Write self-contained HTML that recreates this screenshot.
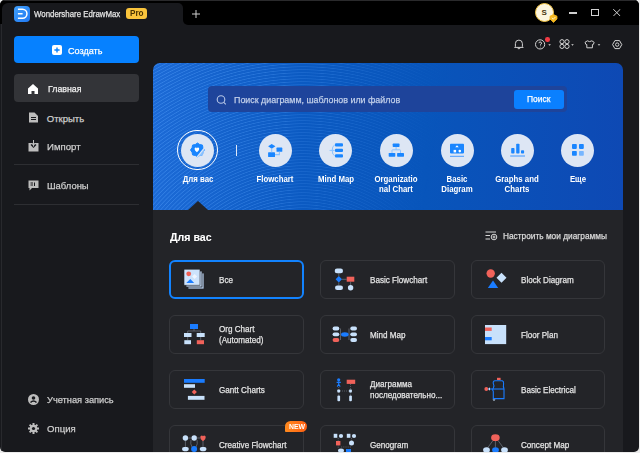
<!DOCTYPE html>
<html><head><meta charset="utf-8">
<style>
*{margin:0;padding:0;box-sizing:border-box}
html,body{width:640px;height:453px;overflow:hidden;background:#ececec;font-family:"Liberation Sans",sans-serif;color:#e6e6e6}
.a{position:absolute}
.t{position:absolute;line-height:1;white-space:nowrap;transform-origin:0 0;-webkit-text-stroke:.25px currentColor;margin-top:.4px}
#win{left:0;top:0;width:639px;height:452px;background:#18191d;border-radius:5px;overflow:hidden}
#titlebar{left:183px;top:0;width:456px;height:24.5px;background:#000;border-radius:0 0 0 5px}
#tbl{left:0;top:0;width:183px;height:24px;background:#000}
#tab{left:2px;top:2.5px;width:181px;height:40px;background:#18191d;border-radius:6px 5px 0 0}
#main{left:153px;top:63px;width:470px;height:392px;background:#232428;border-radius:7px 7px 0 0;overflow:hidden}
#banner{left:0;top:0;width:470px;height:147px;background:linear-gradient(90deg,#1c6ad6 0%,#0b5ac2 32%,#0855bb 58%,#0e49b4 100%)}
#stripes{left:0;top:0;width:470px;height:147px;background:repeating-radial-gradient(circle at 150px 270px,rgba(80,160,255,0) 0,rgba(80,160,255,0) 1.5px,rgba(90,165,255,.42) 2.2px,rgba(80,160,255,0) 3px);-webkit-mask-image:linear-gradient(100deg,#000 0%,rgba(0,0,0,.7) 30%,rgba(0,0,0,0) 60%);mask-image:linear-gradient(100deg,#000 0%,rgba(0,0,0,.7) 30%,rgba(0,0,0,0) 60%)}
.nt{font-size:9.5px;color:#cdcdcd}
.cat{position:absolute;width:70px;text-align:center;font-size:9px;font-weight:bold;color:#fff;line-height:10px}
.circ{position:absolute;width:33px;height:33px;border-radius:50%;background:#dde6f4}
.card{position:absolute;width:134.3px;height:38.6px;border:1px solid #35363a;border-radius:6px}
.ct{font-size:9px;color:#e4e4e4}
</style></head><body>
<div id="win" class="a">
<div id="tbl" class="a"></div><div id="titlebar" class="a"></div><div class="a" style="left:0;top:0;width:639px;height:1px;background:#2a2a2c"></div><div class="a" style="left:1px;top:24px;width:1px;height:430px;background:#28292d"></div>
<div id="tab" class="a"></div>
<!-- logo -->
<svg class="a" style="left:14px;top:6px" width="16" height="16" viewBox="0 0 16 16">
<defs><linearGradient id="lg" x1="0" y1="0" x2="1" y2="1"><stop offset="0" stop-color="#41a0fb"/><stop offset="1" stop-color="#1f78f2"/></linearGradient></defs>
<rect width="16" height="16" rx="4" fill="url(#lg)"/>
<path d="M3.9 3.3H8.5A4.45 4.45 0 0 1 8.5 12.2H3.9M3.9 7.75H8.6" stroke="#fff" stroke-width="1.5" fill="none"/>
</svg>
<div class="t" style="left:34px;top:9.6px;font-size:9.2px;color:#e6e6e6;transform:scaleX(.855)">Wondershare EdrawMax</div>
<div class="a" style="left:125.7px;top:8.2px;width:21.3px;height:11.3px;border-radius:3px;background:#fac43c"></div>
<div class="t" style="left:129.7px;top:9.1px;font-size:8.6px;font-weight:bold;color:#4a3200;-webkit-text-stroke:0;transform:scaleX(.95)">Pro</div>
<svg class="a" style="left:191.5px;top:9.5px" width="8" height="8" viewBox="0 0 8 8"><path d="M4 0V8M0 4H8" stroke="#d0d0d0" stroke-width="1"/></svg>

<!-- avatar & window controls -->
<div class="a" style="left:534.8px;top:2.8px;width:19.2px;height:19.2px;border-radius:50%;background:#fcf5df;border:1.5px solid #f2c445"></div>
<div class="t" style="left:541.6px;top:8.4px;font-size:8px;font-weight:bold;color:#4a3510;-webkit-text-stroke:0">S</div>
<svg class="a" style="left:549px;top:13.5px" width="9" height="9" viewBox="0 0 9 9"><path d="M1 2.2L4.5 0.6L8 2.2V5L4.5 8.4L1 5Z" fill="#f5b820" stroke="#f5b820" stroke-width=".8" stroke-linejoin="round"/><path d="M2.8 3.8L4.3 5.2L6.4 3" stroke="#fff6d6" stroke-width=".9" fill="none"/></svg>
<div class="a" style="left:569.3px;top:12.3px;width:7.7px;height:1.3px;background:#cfcfcf"></div>
<div class="a" style="left:590.6px;top:9.1px;width:8.8px;height:7px;border:1.1px solid #d2d2d2"></div>
<svg class="a" style="left:613.2px;top:9px" width="7.6" height="7.3" viewBox="0 0 7.6 7.3"><path d="M0.2 0.1L7.4 7.2M7.4 0.1L0.2 7.2" stroke="#d2d2d2" stroke-width="1"/></svg>

<!-- toolbar icons -->
<svg class="a" style="left:512px;top:37px" width="116" height="15" viewBox="512 37 116 15" fill="none" stroke="#d2d2d2" stroke-width="1">
<path d="M515.4 46.6V43.6A3.5 3.5 0 0 1 522.4 43.6V46.6L523.2 47.4H514.6Z" stroke-linejoin="round"/><path d="M517.7 47.6A1.2 1.2 0 0 0 520.1 47.6"/>
<circle cx="540.1" cy="44.4" r="4.6"/><path d="M538.9 43.2A1.3 1.3 0 1 1 540.5 44.5V45.5M540.4 46.8V47.3"/>
<path d="M548.3 44.2L550.9 44.2L549.6 45.7Z" fill="#dcdcdc" stroke="none"/>
<circle cx="562" cy="41.7" r="2.1"/><circle cx="567" cy="41.7" r="2.1"/><circle cx="562" cy="46.4" r="2.1"/><circle cx="567" cy="46.4" r="2.1"/>
<path d="M571.2 44.2L573.8 44.2L572.5 45.7Z" fill="#dcdcdc" stroke="none"/>
<path d="M587.3 40.8Q589.6 42.4 591.9 40.8L594.2 42.4L593.2 44.6H592.4V47.8H586.8V44.6H586L585 42.4Z" stroke-linejoin="round"/>
<path d="M597.7 44.2L600.3 44.2L599 45.7Z" fill="#dcdcdc" stroke="none"/>
<path d="M612.6 44.6L614.9 40.6H619.5L621.8 44.6L619.5 48.6H614.9Z" stroke-linejoin="round"/><circle cx="617.2" cy="44.6" r="1.7"/>
</svg>
<div class="a" style="left:545.4px;top:37px;width:4.6px;height:4.6px;border-radius:50%;background:#f03a44"></div>

<!-- sidebar -->
<div class="a" style="left:14px;top:36px;width:125px;height:27px;border-radius:4px;background:#0681ff"></div>
<svg class="a" style="left:52px;top:45px" width="10" height="10" viewBox="0 0 10 10"><rect width="10" height="10" rx="2" fill="#fff"/><path d="M5 2.4V7.6M2.4 5H7.6" stroke="#0681ff" stroke-width="1.4"/></svg>
<div class="t" style="left:68px;top:45.5px;font-size:9.5px;color:#fff;transform:scaleX(.953)">Создать</div>

<div class="a" style="left:14px;top:74px;width:125px;height:28px;border-radius:4px;background:#333438"></div>
<svg class="a" style="left:27px;top:83px" width="12" height="12" viewBox="0 0 12 12"><path d="M1 5.5L6 1L11 5.5V11H7.5V8H4.5V11H1Z" fill="#fff"/></svg>
<div class="t nt" style="left:47.5px;top:84.1px;color:#f2f2f2;transform:scaleX(.925)">Главная</div>

<svg class="a" style="left:28px;top:112px" width="11" height="11" viewBox="0 0 11 11"><path d="M1 0.5H6.5L10 4V10.5H1Z" fill="#bdbdbd"/><path d="M3 5.5H8M3 7.5H8" stroke="#18191d" stroke-width="1"/></svg>
<div class="t nt" style="left:46.8px;top:113.6px;transform:scaleX(1.0)">Открыть</div>

<svg class="a" style="left:28px;top:140px" width="11" height="12" viewBox="0 0 11 12"><path d="M0.5 3H10.5V11.5H0.5Z" fill="#bdbdbd"/><path d="M5.5 0V7M3 4.5L5.5 7L8 4.5" stroke="#18191d" stroke-width="1.3" fill="none"/><path d="M5.5 0V6.5" stroke="#bdbdbd" stroke-width="1"/></svg>
<div class="t nt" style="left:46.8px;top:141.9px;transform:scaleX(1.01)">Импорт</div>
<div class="a" style="left:14px;top:164px;width:125px;height:1px;background:#2d2e32"></div>

<svg class="a" style="left:28px;top:180px" width="11" height="11" viewBox="0 0 11 11"><path d="M0.5 0.5H10.5V8H4L1.5 10.5V8H0.5Z" fill="#bdbdbd"/><path d="M2.5 3H5M2.5 5H5M6.5 2.5V6" stroke="#18191d" stroke-width="1"/></svg>
<div class="t nt" style="left:46.8px;top:181.1px;transform:scaleX(.99)">Шаблоны</div>
<div class="a" style="left:14px;top:204px;width:125px;height:1px;background:#2d2e32"></div>

<svg class="a" style="left:28px;top:393.5px" width="11" height="11" viewBox="0 0 11 11"><circle cx="5.5" cy="5.5" r="5.5" fill="#bdbdbd"/><circle cx="5.5" cy="4" r="1.8" fill="#18191d"/><path d="M2.5 8.5Q5.5 5.5 8.5 8.5" stroke="#18191d" stroke-width="1.5" fill="none"/></svg>
<div class="t nt" style="left:46.9px;top:394.6px;transform:scaleX(.975)">Учетная запись</div>
<svg class="a" style="left:28px;top:422.5px" width="11" height="11" viewBox="0 0 11 11"><g fill="#bdbdbd"><circle cx="5.5" cy="5.5" r="3.8"/><rect x="4.5" y="0" width="2" height="11"/><rect x="0" y="4.5" width="11" height="2"/><rect x="4.5" y="0" width="2" height="11" transform="rotate(45 5.5 5.5)"/><rect x="4.5" y="0" width="2" height="11" transform="rotate(-45 5.5 5.5)"/></g><circle cx="5.5" cy="5.5" r="1.6" fill="#18191d"/></svg>
<div class="t nt" style="left:46.9px;top:423.6px;transform:scaleX(1.01)">Опция</div>

<!-- main -->
<div id="main" class="a">
  <div id="banner" class="a"></div><div id="stripes" class="a"></div>
  <div class="a" style="left:35px;top:138px;width:0;height:0;border-left:10px solid transparent;border-right:10px solid transparent;border-bottom:9px solid #232428"></div>
</div>
<div class="a" style="left:208px;top:85.5px;width:359px;height:26.5px;border-radius:4px;background:#1e449b"></div>
<svg class="a" style="left:216px;top:95px" width="12" height="10" viewBox="0 0 12 10"><circle cx="5" cy="4.5" r="3.8" stroke="#b9c8e8" stroke-width="1.1" fill="none"/><path d="M7.8 7.3L9.8 9.3" stroke="#b9c8e8" stroke-width="1.1"/></svg>
<div class="t" style="left:234.4px;top:94.9px;font-size:9.5px;color:#c3d0ea;transform:scaleX(.935)">Поиск диаграмм, шаблонов или файлов</div>
<div class="a" style="left:514px;top:89.5px;width:50px;height:19.5px;border-radius:3px;background:#0a80ff"></div>
<div class="t" style="left:526.9px;top:95.1px;font-size:9px;color:#fff;transform:scaleX(.938)">Поиск</div>
<div class="circ" style="left:181.2px;top:133.6px"></div>
<div class="t" style="left:157.7px;top:174.4px;width:80px;text-align:center;font-size:9px;font-weight:bold;color:#fff;transform:scaleX(.87);transform-origin:50% 0;-webkit-text-stroke:0">Для вас</div>
<div class="circ" style="left:258.8px;top:133.6px"></div>
<div class="t" style="left:235.3px;top:174.4px;width:80px;text-align:center;font-size:9px;font-weight:bold;color:#fff;transform:scaleX(.87);transform-origin:50% 0;-webkit-text-stroke:0">Flowchart</div>
<div class="circ" style="left:319.4px;top:133.6px"></div>
<div class="t" style="left:295.9px;top:174.4px;width:80px;text-align:center;font-size:9px;font-weight:bold;color:#fff;transform:scaleX(.87);transform-origin:50% 0;-webkit-text-stroke:0">Mind Map</div>
<div class="circ" style="left:379.9px;top:133.6px"></div>
<div class="t" style="left:356.4px;top:174.4px;width:80px;text-align:center;font-size:9px;font-weight:bold;color:#fff;transform:scaleX(.87);transform-origin:50% 0;-webkit-text-stroke:0">Organizatio</div>
<div class="t" style="left:356.4px;top:184.4px;width:80px;text-align:center;font-size:9px;font-weight:bold;color:#fff;transform:scaleX(.87);transform-origin:50% 0;-webkit-text-stroke:0">nal Chart</div>
<div class="circ" style="left:440.5px;top:133.6px"></div>
<div class="t" style="left:417.0px;top:174.4px;width:80px;text-align:center;font-size:9px;font-weight:bold;color:#fff;transform:scaleX(.87);transform-origin:50% 0;-webkit-text-stroke:0">Basic</div>
<div class="t" style="left:417.0px;top:184.4px;width:80px;text-align:center;font-size:9px;font-weight:bold;color:#fff;transform:scaleX(.87);transform-origin:50% 0;-webkit-text-stroke:0">Diagram</div>
<div class="circ" style="left:500.9px;top:133.6px"></div>
<div class="t" style="left:477.4px;top:174.4px;width:80px;text-align:center;font-size:9px;font-weight:bold;color:#fff;transform:scaleX(.87);transform-origin:50% 0;-webkit-text-stroke:0">Graphs and</div>
<div class="t" style="left:477.4px;top:184.4px;width:80px;text-align:center;font-size:9px;font-weight:bold;color:#fff;transform:scaleX(.87);transform-origin:50% 0;-webkit-text-stroke:0">Charts</div>
<div class="circ" style="left:561.4px;top:133.6px"></div>
<div class="t" style="left:537.9px;top:174.4px;width:80px;text-align:center;font-size:9px;font-weight:bold;color:#fff;transform:scaleX(.87);transform-origin:50% 0;-webkit-text-stroke:0">Еще</div>
<div class="a" style="left:177.3px;top:129.9px;width:40.4px;height:40.4px;border-radius:50%;border:1.7px solid #fff"></div>
<div class="a" style="left:236px;top:144.5px;width:1px;height:11px;background:#dfe8f8"></div>
<div class="t" style="left:169.7px;top:232px;font-size:10.5px;font-weight:bold;color:#fff;transform:scaleX(1.01);-webkit-text-stroke:.1px #fff">Для вас</div>
<svg class="a" style="left:485px;top:231px" width="13" height="10" viewBox="0 0 13 10" fill="none" stroke="#d6d6d6" stroke-width="1"><path d="M0.5 1H11M0.5 4.5H5M0.5 8H5"/><circle cx="9" cy="6" r="2.8"/><circle cx="9" cy="6" r="1"/></svg>
<div class="t" style="left:502.5px;top:231.7px;font-size:9px;color:#dcdcdc;transform:scaleX(.923)">Настроить мои диаграммы</div>
<div class="card" style="left:169.3px;top:260.3px;border:2px solid #1283ff"></div>
<div class="t ct" style="left:218.5px;top:275.4px;transform:scaleX(.9)">Все</div>
<div class="card" style="left:320.3px;top:260.3px"></div>
<div class="t ct" style="left:369.5px;top:275.4px;transform:scaleX(.9)">Basic Flowchart</div>
<div class="card" style="left:470.6px;top:260.3px"></div>
<div class="t ct" style="left:520.5px;top:275.4px;transform:scaleX(.9)">Block Diagram</div>
<div class="card" style="left:169.3px;top:315.3px"></div>
<div class="t ct" style="left:218.5px;top:324.9px;transform:scaleX(.9)">Org Chart</div>
<div class="t ct" style="left:218.5px;top:335.3px;transform:scaleX(.9)">(Automated)</div>
<div class="card" style="left:320.3px;top:315.3px"></div>
<div class="t ct" style="left:369.5px;top:330.4px;transform:scaleX(.9)">Mind Map</div>
<div class="card" style="left:470.6px;top:315.3px"></div>
<div class="t ct" style="left:520.5px;top:330.4px;transform:scaleX(.9)">Floor Plan</div>
<div class="card" style="left:169.3px;top:370.3px"></div>
<div class="t ct" style="left:218.5px;top:385.4px;transform:scaleX(.9)">Gantt Charts</div>
<div class="card" style="left:320.3px;top:370.3px"></div>
<div class="t ct" style="left:369.5px;top:379.9px;transform:scaleX(.9)">Диаграмма</div>
<div class="t ct" style="left:369.5px;top:390.3px;transform:scaleX(.9)">последовательно...</div>
<div class="card" style="left:470.6px;top:370.3px"></div>
<div class="t ct" style="left:520.5px;top:385.4px;transform:scaleX(.9)">Basic Electrical</div>
<div class="card" style="left:169.3px;top:425.3px"></div>
<div class="t ct" style="left:218.5px;top:440.4px;transform:scaleX(.9)">Creative Flowchart</div>
<div class="card" style="left:320.3px;top:425.3px"></div>
<div class="t ct" style="left:369.5px;top:440.4px;transform:scaleX(.9)">Genogram</div>
<div class="card" style="left:470.6px;top:425.3px"></div>
<div class="t ct" style="left:520.5px;top:440.4px;transform:scaleX(.9)">Concept Map</div>
<div class="a" style="left:284.7px;top:420.5px;width:22.3px;height:11.3px;border-radius:6px 6px 6px 1px;background:linear-gradient(90deg,#ff8a1e,#ff5f12)"></div><div class="t" style="left:288.6px;top:422.6px;font-size:7.5px;font-weight:bold;color:#fff;transform:scaleX(.92);-webkit-text-stroke:0">NEW</div>
<svg class="a" style="left:0;top:0" width="640" height="453" viewBox="0 0 640 453">
<g id="caticons">
 <!-- Для вас badge -->
 <defs><clipPath id="lr"><path d="M206 146L195.5 159H208Z"/></clipPath></defs>
 <path d="M197.50 143.00L199.76 144.55L202.45 145.05L202.95 147.74L204.50 150.00L202.95 152.26L202.45 154.95L199.76 155.45L197.50 157.00L195.24 155.45L192.55 154.95L192.05 152.26L190.50 150.00L192.05 147.74L192.55 145.05L195.24 144.55Z" fill="#1a86ff" stroke="#1a86ff" stroke-width="1" stroke-linejoin="round"/>
 <path d="M197.50 143.00L199.76 144.55L202.45 145.05L202.95 147.74L204.50 150.00L202.95 152.26L202.45 154.95L199.76 155.45L197.50 157.00L195.24 155.45L192.55 154.95L192.05 152.26L190.50 150.00L192.05 147.74L192.55 145.05L195.24 144.55Z" fill="#8cc3ff" stroke="#8cc3ff" stroke-width="1" stroke-linejoin="round" clip-path="url(#lr)"/>
 <path d="M206.5 145.4L195 159.6" stroke="#dde6f4" stroke-width="1.3"/>
 <path d="M194.6 148.9A1.15 1.15 0 0 1 196.9 148.6A1.15 1.15 0 0 1 199.2 148.9Q199.3 150.4 196.9 152.2Q194.5 150.4 194.6 148.9Z" fill="#fff"/>
 <!-- Flowchart -->
 <g fill="#1a86ff">
  <path d="M271.7 143.9L275.4 146.3L271.7 148.7L268.1 146.3Z"/>
  <rect x="276.5" y="147.6" width="5.8" height="4.2" rx=".6"/>
  <rect x="268.1" y="152.3" width="6.9" height="4.7" rx=".6"/>
 </g>
 <path d="M271.7 148.5V152.3M275 154.6H279.4V151.8" stroke="#8cc3ff" stroke-width="1.1" fill="none"/>
 <!-- Mind map -->
 <g fill="#1a86ff"><rect x="335" y="143.2" width="8" height="3.3" rx="1"/><rect x="335" y="148.8" width="8" height="3.3" rx="1"/><rect x="335" y="154.3" width="8" height="3.3" rx="1"/></g>
 <path d="M334.8 144.9Q332.2 145.8 332.2 150.4Q332.2 155 334.8 155.9M329.6 150.4H334.8" stroke="#8cc3ff" stroke-width="1" fill="none"/>
 <!-- Org -->
 <g fill="#1a86ff"><rect x="392.7" y="143.6" width="6.8" height="3.3" rx=".6"/><rect x="388.7" y="153" width="6.6" height="3.7" rx=".6"/><rect x="397.1" y="153" width="6.9" height="3.7" rx=".6"/></g>
 <path d="M396.1 146.9V149.8M392 153V150.4Q392 149.8 392.6 149.8H399.8Q400.5 149.8 400.5 150.4V153" stroke="#8cc3ff" stroke-width="1" fill="none"/>
 <!-- Basic diagram -->
 <rect x="450" y="143.8" width="14" height="9.6" rx=".8" fill="#1a86ff"/>
 <path d="M455.3 147.2H458.7L457 145.2Z" fill="#fff"/><rect x="453.6" y="149.9" width="2.5" height="2.5" fill="#fff"/><circle cx="459.8" cy="151.1" r="1.3" fill="#fff"/>
 <rect x="450" y="155.8" width="14" height="1" fill="#4a9cff"/>
 <!-- Graphs -->
 <g fill="#1a86ff"><rect x="511.2" y="148" width="3.3" height="5.6" rx=".8"/><rect x="516.2" y="143.8" width="3.3" height="9.8" rx=".8"/><rect x="521" y="150.3" width="3.1" height="3.3" rx=".8"/></g>
 <rect x="510.2" y="155.4" width="14.8" height="1.2" fill="#5aa6ff"/>
 <!-- More -->
 <g fill="#1a86ff"><rect x="572" y="144.1" width="4.8" height="4.8" rx=".8"/><rect x="579" y="144.1" width="4.8" height="4.8" rx=".8"/><rect x="572" y="151" width="4.8" height="4.8" rx=".8"/></g>
 <rect x="579" y="151" width="4.8" height="4.8" rx=".8" fill="#76b6ff"/>
</g>
<g id="cardicons">
 <!-- Все -->
 <rect x="188" y="273" width="16" height="16" fill="#bcd5f3" stroke="#232428" stroke-width=".8"/>
 <rect x="186" y="271" width="16" height="16" fill="#c2d9f5" stroke="#232428" stroke-width=".8"/>
 <rect x="184" y="269.2" width="16" height="16" fill="#cde3fc" stroke="#232428" stroke-width=".6"/>
 <circle cx="188.7" cy="273.8" r="2.4" fill="#f15e52"/>
 <path d="M194.6 273.9L197.1 276.4L194.6 278.9L192.1 276.4Z" fill="#eef5ff"/>
 <path d="M186.3 283H194.2L190.3 279Z" fill="#1a7cff"/>
 <!-- Basic flowchart -->
 <g stroke="#6a707a" stroke-width=".8"><path d="M338.8 273.2V276.2M338.8 282.4V285.6M342 279.3H346.7M350.6 281.7V285.1"/></g>
 <rect x="334.7" y="268.6" width="8.3" height="4.6" rx="2.3" fill="#c8e1fb"/>
 <path d="M338.8 276.1L342 279.3L338.8 282.5L335.6 279.3Z" fill="#1a7cff"/>
 <rect x="346.7" y="276.7" width="7.6" height="5" fill="#f0625a"/>
 <rect x="335" y="285.6" width="8" height="4.5" rx="2.25" fill="#c8e1fb"/>
 <circle cx="350.6" cy="287.8" r="2.7" fill="#c8e1fb"/>
 <!-- Block diagram -->
 <circle cx="490.7" cy="273.5" r="4.2" fill="#f0625a"/>
 <path d="M501.5 272.8L506.5 277.8L501.5 282.8L496.5 277.8Z" fill="#c8e1fb"/>
 <path d="M487.8 288H498.2L493 280.6Z" fill="#1a7cff"/>
 <!-- Org chart -->
 <path d="M194 329V331M187.7 333V331H200.7V333M187.7 337V340.2M200.7 337V340.2" stroke="#6a707a" stroke-width=".8" fill="none"/>
 <rect x="190" y="324" width="8" height="5" fill="#1a7cff"/>
 <rect x="184" y="333" width="7.5" height="4" fill="#c8e1fb"/>
 <rect x="196.7" y="333" width="8" height="4" fill="#c8e1fb"/>
 <rect x="184.3" y="340.2" width="6.7" height="4" fill="#c8e1fb"/>
 <rect x="196.8" y="340.2" width="7.2" height="4" fill="#f0625a"/>
 <!-- Mind map -->
 <path d="M340.5 328.5V340M349 328.5V340" stroke="#6a707a" stroke-width=".8" fill="none"/>
 <g fill="#c8e1fb"><rect x="332.6" y="326.6" width="6.7" height="3.8" rx="1.9"/><rect x="332.6" y="332.4" width="6.7" height="3.8" rx="1.9"/>
 <rect x="350.3" y="326.6" width="6.7" height="3.8" rx="1.9"/><rect x="350.3" y="332.4" width="6.7" height="3.8" rx="1.9"/><rect x="350.3" y="338.1" width="6.7" height="3.8" rx="1.9"/></g>
 <rect x="332.6" y="338.1" width="6.7" height="3.8" rx="1.9" fill="#f0625a"/>
 <ellipse cx="344.8" cy="334.5" rx="3.8" ry="2.2" fill="#1a7cff"/>
 <!-- Floor plan -->
 <rect x="485" y="325" width="21.2" height="19.1" fill="#c8e1fb"/>
 <rect x="485" y="327.5" width="6.7" height="3.4" fill="#f0625a"/>
 <rect x="485" y="337" width="6.7" height="3.3" fill="#1a7cff"/>
 <!-- Gantt -->
 <rect x="184" y="379" width="20.7" height="3.8" fill="#1a7cff"/>
 <rect x="184" y="384.2" width="11" height="3.6" fill="#c8e1fb"/>
 <path d="M194.3 389.4L196.9 392L194.3 394.6L191.7 392Z" fill="#f0625a"/>
 <rect x="187.9" y="395.9" width="16.6" height="3.9" fill="#c8e1fb"/>
 <!-- Sequence -->
 <path d="M338.7 387V389.5M338.7 392.3V395.6M350.5 384V389.5M350.5 392.3V395.6M340 391H349" stroke="#6a707a" stroke-width=".7" stroke-dasharray="1 1" fill="none"/>
 <circle cx="338.7" cy="379.8" r="1.6" fill="#1a7cff"/>
 <path d="M338.7 381.3V384.2M336.6 382.4H340.8M338.7 384.2L337.2 386.6M338.7 384.2L340.2 386.6" stroke="#1a7cff" stroke-width="1.1" fill="none"/>
 <rect x="346.7" y="379.7" width="8.5" height="4.2" fill="#f0625a"/>
 <rect x="337.3" y="389.6" width="2.8" height="2.8" rx=".6" fill="#c8e1fb"/>
 <rect x="349.1" y="389.6" width="2.8" height="2.8" rx=".6" fill="#c8e1fb"/>
 <rect x="337.4" y="395.6" width="2.7" height="5.6" rx="1" fill="#c8e1fb"/>
 <rect x="349.2" y="395.6" width="2.7" height="5.6" rx="1" fill="#c8e1fb"/>
 <!-- Basic electrical -->
 <path d="M495 380.8H502.2Q503.8 381.2 503.6 383.5Q503 386.5 504 389V398.6H493.3V391.5Q492 389.8 493.3 388Q494.6 385.8 493.3 383.5Q492.8 381 495 380.8Z" stroke="#1a7cff" stroke-width="1.1" fill="none"/>
 <path d="M486.5 389H504" stroke="#1a7cff" stroke-width="1.1"/>
 <rect x="497" y="377.8" width="3.6" height="2.2" fill="#f0625a"/>
 <circle cx="486.3" cy="389" r="1.9" fill="#f0625a"/>
 <path d="M488.2 389L490 387.3V390.7Z" fill="#c8e1fb"/>
 <path d="M492.5 399.5H495.5L494 401Z" fill="#c8e1fb"/>
 <!-- Creative flowchart -->
 <path d="M185.4 440.7V447M203 440.7V447M188 438H191.5M197 438H200.3M191 440Q190 444 192 447M197 440Q198 444 196 447" stroke="#6a707a" stroke-width=".8" fill="none"/>
 <circle cx="185.4" cy="438" r="2.7" fill="#c8e1fb"/><circle cx="194.2" cy="438" r="2.7" fill="#c8e1fb"/>
 <path d="M203 441.2Q200 439 200.3 437.2A1.5 1.5 0 0 1 203 436.2A1.5 1.5 0 0 1 205.7 437.2Q206 439 203 441.2Z" fill="#f0625a"/>
 <rect x="182" y="447" width="6.8" height="4.2" rx="2.1" fill="#c8e1fb"/>
 <circle cx="194.1" cy="449" r="3" fill="#1a7cff"/>
 <rect x="199.7" y="447" width="6.8" height="4.2" rx="2.1" fill="#c8e1fb"/>
 <!-- Genogram -->
 <path d="M338.2 438V441M351.5 438V440.5M338.2 445.4V448M341 447H351" stroke="#6a707a" stroke-width=".7" stroke-dasharray="1 .8" fill="none"/>
 <rect x="333.7" y="433.8" width="3.6" height="4" fill="#c8e1fb"/><circle cx="341" cy="436" r="2.1" fill="#c8e1fb"/>
 <rect x="346.8" y="433.8" width="3.6" height="4" fill="#c8e1fb"/><circle cx="354" cy="436" r="2.1" fill="#c8e1fb"/>
 <rect x="336" y="441" width="4.4" height="4.4" fill="#f0625a"/>
 <circle cx="351.5" cy="443" r="2.5" fill="#c8e1fb"/>
 <ellipse cx="341" cy="450.5" rx="3" ry="2" fill="#c8e1fb"/>
 <rect x="346" y="449" width="5" height="3" fill="#1a7cff"/>
 <!-- Concept map -->
 <path d="M493 440.5L487.5 448M495.4 441V447.5M498 440.5L503.5 448" stroke="#6a707a" stroke-width=".8" fill="none"/>
 <ellipse cx="495.4" cy="437.7" rx="4.3" ry="3.4" fill="#f0625a"/>
 <ellipse cx="486.5" cy="450" rx="3.4" ry="2.7" fill="#c8e1fb"/>
 <ellipse cx="495.5" cy="450" rx="3.4" ry="2.7" fill="#1a7cff"/>
 <ellipse cx="504.5" cy="450" rx="3.4" ry="2.7" fill="#c8e1fb"/>
</g>
</svg>
</div>
</body></html>
